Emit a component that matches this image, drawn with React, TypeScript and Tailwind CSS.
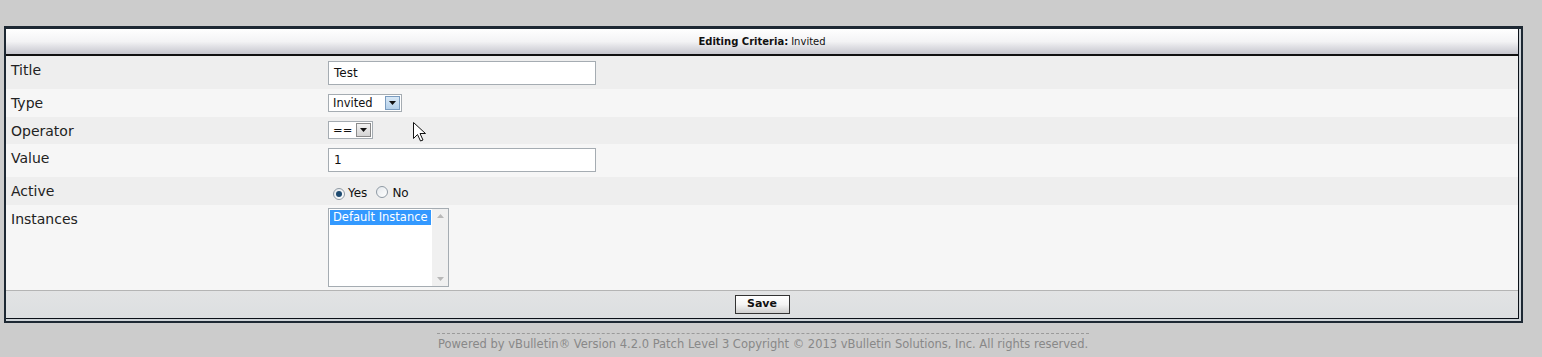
import React from "react";

const font = { fontFamily: '"DejaVu Sans", Verdana, sans-serif' };

function Row({
  label,
  shade,
  h,
  pad,
  children,
}: {
  label: string;
  shade: "dark" | "light";
  h: string;
  pad: string;
  children: React.ReactNode;
}) {
  return (
    <div className={`flex ${h} ${shade === "dark" ? "bg-[#eeeeee]" : "bg-[#f6f6f6]"}`}>
      <div className="w-[322px] shrink-0 pl-[5px] pt-[5px] text-[14px] leading-[18px] text-[#222]">{label}</div>
      <div className={`flex-1 ${pad}`}>{children}</div>
    </div>
  );
}

function SelectBox({ value, width, blue }: { value: string; width: string; blue?: boolean }) {
  return (
    <div className={`flex h-[18px] ${width} items-stretch border border-[#a5acb2] bg-white`}>
      <div className="flex-1 pl-[4px] text-[11.5px] leading-[16px] text-[#111]">{value}</div>
      <div
        className={`m-px flex w-[15px] items-center justify-center border ${
          blue ? "border-[#7a9cc0] bg-gradient-to-b from-[#d8e8f6] to-[#b4d0ea]" : "border-[#8a8a8a] bg-gradient-to-b from-[#f2f2f2] to-[#d4d4d4]"
        }`}
      >
        <svg width="7" height="4" viewBox="0 0 7 4">
          <path d="M0 0h7L3.5 4z" fill="#111" />
        </svg>
      </div>
    </div>
  );
}

function Radio({ on }: { on?: boolean }) {
  return (
    <span className="inline-flex h-[12px] w-[12px] items-center justify-center rounded-full border border-[#8f9aa4] bg-gradient-to-br from-[#e4e8ec] to-white">
      {on && <span className="h-[6px] w-[6px] rounded-full bg-[#1d4a70]" />}
    </span>
  );
}

export default function App() {
  return (
    <div className="relative h-[357px] w-[1542px] bg-[#cccccc] pl-[4px] pt-[26px]" style={font}>
      {/* form table */}
      <div className="w-[1519px] border-[2px] border-t-[3px] border-[#1d2833] bg-[#cdd3d7] pb-[2px] pr-[2px]">
        <div className="border-b border-r border-[#0b1119]">
          <div className="flex h-[27px] items-center justify-center border-b-2 border-[#111] bg-gradient-to-b from-[#ffffff] via-[#f3f3f5] to-[#c6c6ce] text-[10px] text-[#111]">
            <span className="font-bold">Editing Criteria:</span>
            <span className="ml-[3px]">Invited</span>
          </div>

          <Row label="Title" shade="dark" h="h-[33px]" pad="pt-[5px]">
            <div className="h-[24px] w-[268px] border border-[#a5acb2] bg-white pl-[5px] text-[12px] leading-[22px] text-[#111]">
              Test
            </div>
          </Row>
          <Row label="Type" shade="light" h="h-[28px]" pad="pt-[5px]">
            <SelectBox value="Invited" width="w-[74px]" blue />
          </Row>
          <Row label="Operator" shade="dark" h="h-[27px]" pad="pt-[4px]">
            <SelectBox value="==" width="w-[45px]" />
          </Row>
          <Row label="Value" shade="light" h="h-[33px]" pad="pt-[4px]">
            <div className="h-[24px] w-[268px] border border-[#a5acb2] bg-white pl-[5px] text-[12px] leading-[22px] text-[#111]">
              1
            </div>
          </Row>
          <Row label="Active" shade="dark" h="h-[28px]" pad="pt-[9px] pl-[5px]">
            <div className="flex items-center text-[12px] leading-[13px] text-[#111]">
              <Radio on />
              <span className="ml-[3px]">Yes</span>
              <span className="ml-[9px]">
                <Radio />
              </span>
              <span className="ml-[4px]">No</span>
            </div>
          </Row>
          <Row label="Instances" shade="light" h="h-[85px]" pad="pt-[3px]">
            <div className="flex h-[79px] w-[121px] border border-[#a5acb2] bg-white">
              <div className="flex-1 p-px">
                <div className="h-[15px] bg-[#3399ff] pl-[3px] text-[11.5px] leading-[15px] text-white">Default Instance</div>
              </div>
              <div className="flex w-[16px] flex-col items-center justify-between bg-[#f0f0f0] py-[5px]">
                <svg width="7" height="4" viewBox="0 0 7 4">
                  <path d="M3.5 0L7 4H0z" fill="#b8b8b8" />
                </svg>
                <svg width="7" height="4" viewBox="0 0 7 4">
                  <path d="M0 0h7L3.5 4z" fill="#b8b8b8" />
                </svg>
              </div>
            </div>
          </Row>

          <div className="flex h-[28px] items-center justify-center border-t border-[#b4b4b4] bg-gradient-to-b from-[#e2e3e4] to-[#dcdfe1]">
            <div className="flex h-[19px] w-[55px] items-center justify-center border border-[#333] bg-gradient-to-b from-white via-[#f4f4f4] to-[#cfcfcf] text-[11px] font-bold text-[#111]">
              Save
            </div>
          </div>
        </div>
      </div>

      {/* copyright */}
      <div className="mt-[10px] flex justify-center pr-[20px]">
        <div className="border-t border-dashed border-[#9a9a9a] px-[1px] pt-[3px] text-[11.5px] leading-[15px] text-[#888]">
          Powered by vBulletin® Version 4.2.0 Patch Level 3 Copyright © 2013 vBulletin Solutions, Inc. All rights reserved.
        </div>
      </div>

      {/* mouse cursor */}
      <svg className="absolute left-[413px] top-[122px]" width="13" height="20" viewBox="0 0 13 20">
        <path d="M0.5 0.5V16.5L4.5 12.5L7.5 19L10 18L7 11.5H12.5Z" fill="#fff" stroke="#111" strokeWidth="1" strokeLinejoin="round" />
      </svg>
    </div>
  );
}
